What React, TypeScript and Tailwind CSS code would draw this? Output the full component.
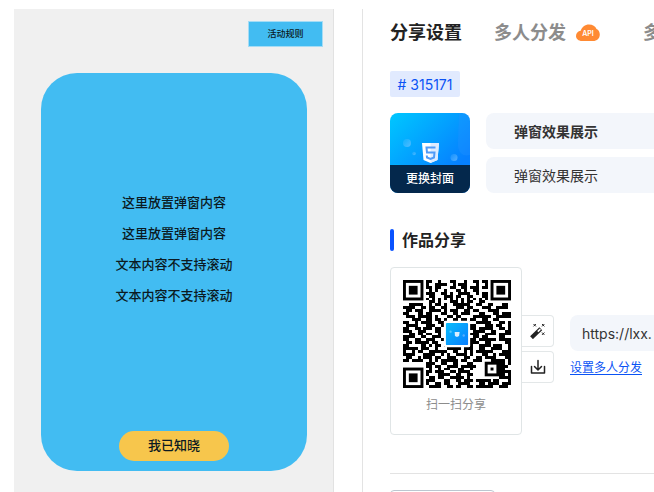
import type { ReactNode } from "react";

const POPUP_LINES = [
	"这里放置弹窗内容",
	"这里放置弹窗内容",
	"文本内容不支持滚动",
	"文本内容不支持滚动",
];

// 37 x 37 modules, finder and alignment patterns are drawn separately
const QR_ROWS = [
	"........##..#...##...#..##.##........",
	"........#..####..#.###...#..#........",
	"........##.##...##..##.###.##........",
	".........#.#..#...##.#..##...........",
	"........###..##.#..####..#.##........",
	".........##...###.##..##...##........",
	"........#.#.#.#.#.#.#.#.#.#.#........",
	".........##.#...###.#.##..##.........",
	"..#####..#.##.#..######..##..##...##.",
	"####..##.##..##...###.##...###..####.",
	".##.###..####.#.###..##.##...####....",
	"##...##.##...##..##.###...##...##.###",
	".###.#####.#...##.##....######..#####",
	"...###..##.##.#..##.##.##..##..##....",
	"##..#.####..##........#..#####...##.#",
	".####...###..#.........##...###.##..#",
	"##..##.###.##..........##.#####..##.#",
	"###..###...##...........####..##...##",
	"..##.##.##..#..........###..####.####",
	"####..##..###...........##.##....##..",
	"##..##..###..#.........##.######.####",
	".##.#####.##...........###..##.....##",
	"##....##.#.##.#........#..####.###..#",
	"#####.###..#...#####.###..##..####..#",
	"#..#.##..######..##..#.#.######...###",
	"####...####..#.#..####.#...##..#.####",
	".##..#.###.##..###...##..##.####...##",
	"##.####..#.#.######.##..###...#####.#",
	"........###..##..##...##.........##.#",
	"........##.##..####.#####.......####.",
	".........#..#.##...##..#.........##..",
	"........##.###..##.####..........####",
	"........#...####..##..##.........##.#",
	".........##.##..#####.#..........####",
	"........###...##..##.###.#####.##...#",
	"........#..##.##...####...##.####.###",
	".........####..##.##..##.######..###.",
];

function Finder({ x, y }: { x: number; y: number }) {
	return (
		<g>
			<rect x={x} y={y} width="7" height="7" />
			<rect x={x + 1} y={y + 1} width="5" height="5" fill="#fff" />
			<rect x={x + 2} y={y + 2} width="3" height="3" />
		</g>
	);
}

function QrCode() {
	const d = QR_ROWS.map((row, y) =>
		[...row]
			.map((cell, x) => (cell === "#" ? `M${x} ${y}h1v1h-1z` : ""))
			.join(""),
	).join("");

	return (
		<svg
			viewBox="0 0 37 37"
			className="size-[108px]"
			role="img"
			aria-label="扫一扫分享"
		>
			<defs>
				<linearGradient id="qrLogo" x1="0" y1="0" x2="1" y2="1">
					<stop offset="0" stopColor="#08bdfb" />
					<stop offset="1" stopColor="#087eff" />
				</linearGradient>
			</defs>
			<rect width="37" height="37" fill="#fff" />
			<path d={d} shapeRendering="crispEdges" />
			<Finder x={0} y={0} />
			<Finder x={30} y={0} />
			<Finder x={0} y={30} />
			<rect x="28" y="28" width="5" height="5" />
			<rect x="29" y="29" width="3" height="3" fill="#fff" />
			<rect x="30" y="30" width="1" height="1" />
			<rect x="14" y="14" width="9" height="9" rx="0.5" fill="#fff" />
			<rect
				x="14.7"
				y="14.7"
				width="7.6"
				height="7.6"
				rx="0.4"
				fill="url(#qrLogo)"
			/>
			<path d="M17.7 17.800h1.700l-.2 1.400-.7.3-.7-.3z" fill="#d9efff" />
			<circle cx="16.300" cy="17.700" r="0.4" fill="#57c8ff" />
			<circle cx="20.800" cy="19" r="0.4" fill="#57aeff" />
		</svg>
	);
}

function CoverArt() {
	return (
		<svg viewBox="0 0 80 80" className="size-full" aria-hidden="true">
			<defs>
				<linearGradient id="cover" x1="0" y1="0" x2="1" y2="1">
					<stop offset="0.05" stopColor="#00c3ff" />
					<stop offset="0.75" stopColor="#0680ff" />
				</linearGradient>
				<linearGradient id="bubble" x1="0" y1="0" x2="1" y2="1">
					<stop offset="0" stopColor="#6fc4ff" stopOpacity="0.15" />
					<stop offset="1" stopColor="#8dccff" stopOpacity="0.6" />
				</linearGradient>
			</defs>
			<rect width="80" height="80" fill="url(#cover)" />
			<path d="M69 0h11v42c-8 2-13-3-12-14z" fill="#2492ff" opacity="0.35" />
			<path d="M0 52c8-3 16 1 22 6H0z" fill="#00b5ff" opacity="0.6" />
			<circle cx="17" cy="30" r="4" fill="url(#bubble)" />
			<circle cx="24" cy="40.500" r="1.800" fill="url(#bubble)" />
			<circle cx="64" cy="44.500" r="3.500" fill="url(#bubble)" />
			<path d="M32 30h17l-1.500 17-7 3-7-3z" fill="#fff" />
			<path d="M40.500 30H49l-1.500 17-7 3z" fill="#dcebff" />
			<path
				d="M45.500 34.500h-9l.5 5h7.500l-.5 5-3.500 1.500-3.500-1.500-.2-2"
				fill="none"
				stroke="#4f9bf8"
				strokeWidth="2"
			/>
		</svg>
	);
}

function ApiBadge() {
	return (
		<svg
			viewBox="0 0 24 18"
			className="h-[18px] w-6 shrink-0"
			role="img"
			aria-label="API"
		>
			<path
				d="M6 17C2.500 17 0 14.800 0 12c0-2.800 2-4.900 4.700-5.200C5.800 3 9 .5 13 .5c3.600 0 6.300 1.700 7.500 4.500 2 .9 3.300 2.900 3.300 5.400 0 3.800-2.800 6.600-6.800 6.600z"
				fill="#ff8a33"
			/>
			<text
				x="12"
				y="12"
				textAnchor="middle"
				fontSize="7"
				fontWeight="600"
				fill="#fff"
			>
				API
			</text>
		</svg>
	);
}

function WandIcon() {
	return (
		<svg viewBox="0 0 16 16" className="size-4" aria-hidden="true">
			<path d="M1.500 14.700 10.800 5.700" stroke="#222" strokeWidth="4" />
			<path d="m7.800 8.600 2.600-2.500" stroke="#fff" strokeWidth="1.600" />
			<path
				d="m3.500 1 2.400 2.400m0-2.400L3.500 3.400M12 1l2.400 2.400m0-2.400L12 3.400M12 9.500l2.400 2.400m0-2.400L12 11.900"
				stroke="#222"
				strokeWidth="1"
			/>
		</svg>
	);
}

function DownloadIcon() {
	return (
		<svg
			viewBox="0 0 16 16"
			className="size-4"
			fill="none"
			stroke="#222"
			strokeWidth="1.500"
			strokeLinecap="round"
			strokeLinejoin="round"
			aria-hidden="true"
		>
			<path d="M8 1.500v9M4.500 7.500 8 11l3.500-3.500M1.500 7.500V14h13V7.500" />
		</svg>
	);
}

function IconButton({
	label,
	children,
}: {
	label: string;
	children: ReactNode;
}) {
	return (
		<button
			type="button"
			aria-label={label}
			className="flex size-8 items-center justify-center rounded-r border border-l-0 border-[#e3e7e8] bg-white"
		>
			{children}
		</button>
	);
}

function Preview() {
	return (
		<section className="mt-[9px] flex w-[320px] shrink-0 flex-col border-r border-[#e2e2e2] bg-[#f0f0f0] pt-3 text-[13px] text-[#0b1a22]">
			<button
				type="button"
				className="mr-[10px] flex h-[26px] w-[75px] items-center justify-center self-end border border-[#a5dcf5] bg-[#42bcf2] text-[9px] font-medium"
			>
				活动规则
			</button>
			<div className="mr-[26px] ml-[27px] mt-[26px] flex h-[398px] shrink-0 flex-col items-center rounded-[36px] bg-[#42bcf2] pt-[114px] pb-[10px] font-medium">
				{POPUP_LINES.map((line, i) => (
					<p key={i} className="leading-[31px]">
						{line}
					</p>
				))}
				<button
					type="button"
					className="mt-auto h-[30px] w-[110px] rounded-full bg-[#f7c64c] font-medium"
				>
					我已知晓
				</button>
			</div>
		</section>
	);
}

function ShareSettings() {
	return (
		<section className="mt-[9px] ml-7 flex min-w-0 flex-1 flex-col overflow-hidden border-l border-[#e3e3e3] pt-2 pl-[27px]">
			<nav className="flex h-8 shrink-0 items-center text-[18px] leading-8 whitespace-nowrap">
				<button type="button" className="font-bold text-[#222]">
					分享设置
				</button>
				<button
					type="button"
					className="ml-8 flex items-center gap-[10px] font-bold text-[#8c8c8c]"
				>
					多人分发
					<ApiBadge />
				</button>
				<button type="button" className="ml-[43px] font-bold text-[#8c8c8c]">
					多
				</button>
			</nav>

			<div className="mt-[22px] flex h-[26px] w-[70px] shrink-0 items-center justify-center rounded-[2px] bg-[#e1eafe] text-[14px] text-[#0a53f5]">
				# 315171
			</div>

			<div className="mt-4 flex shrink-0 gap-4">
				<button
					type="button"
					className="relative size-20 shrink-0 overflow-hidden rounded-lg"
				>
					<CoverArt />
					<span className="absolute inset-x-0 bottom-0 h-7 bg-[#04284c] text-[12px] leading-7 font-medium text-white">
						更换封面
					</span>
				</button>
				<div className="flex min-w-0 flex-1 flex-col gap-2 text-[14px] text-[#333]">
					<input
						aria-label="标题"
						defaultValue="弹窗效果展示"
						className="h-9 w-full rounded-l-lg bg-[#f3f6fb] pl-7 font-bold"
					/>
					<input
						aria-label="描述"
						defaultValue="弹窗效果展示"
						className="h-9 w-full rounded-l-lg bg-[#f3f6fb] pl-7"
					/>
				</div>
			</div>

			<h2 className="mt-9 flex shrink-0 items-center gap-2 text-[16px] leading-[22px] font-bold text-[#222]">
				<span className="h-[22px] w-1 rounded-[2px] bg-[#0a53ff]" />
				作品分享
			</h2>

			<div className="mt-4 flex shrink-0">
				<div className="h-[168px] w-[132px] shrink-0 rounded border border-[#e0e5e6] pt-3 pl-3">
					<QrCode />
					<p className="mt-2 pr-3 text-center text-[12px] leading-[18px] text-[#8c8c8c]">
						扫一扫分享
					</p>
				</div>
				<div className="mt-12 flex shrink-0 flex-col gap-1">
					<IconButton label="美化二维码">
						<WandIcon />
					</IconButton>
					<IconButton label="下载二维码">
						<DownloadIcon />
					</IconButton>
				</div>
				<div className="mt-12 ml-4 flex min-w-0 flex-1 flex-col items-start">
					<input
						aria-label="作品链接"
						readOnly
						value="https://lxx."
						className="h-9 w-full rounded-l-lg bg-[#f3f6fb] pl-3 text-[14px] text-[#333]"
					/>
					<a
						href="#distribute"
						className="mt-2 text-[12px] leading-[18px] text-[#0a53f5] underline underline-offset-2"
					>
						设置多人分发
					</a>
				</div>
			</div>

			<hr className="mt-[38px] shrink-0 border-[#e3e3e3]" />
			<div className="mt-4 h-9 w-[105px] shrink-0 rounded border border-[#bcc6d0]" />
		</section>
	);
}

export default function App() {
	return (
		<main className="flex h-screen overflow-hidden bg-white pl-[14px] font-[Inter,'Noto_Sans_CJK_SC',sans-serif]">
			<Preview />
			<ShareSettings />
		</main>
	);
}
